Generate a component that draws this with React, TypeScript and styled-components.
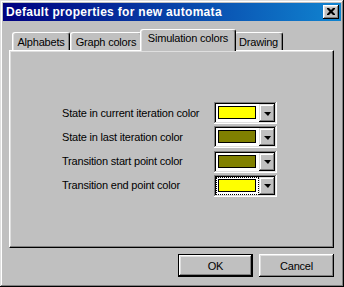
import React from "react";
import styled, { createGlobalStyle } from "styled-components";

const Global = createGlobalStyle`
  html, body { margin: 0; padding: 0; background: #c0c0c0; }
  body { font-family: "Liberation Sans", Arial, sans-serif; font-size: 11px; color: #000; }
  * { box-sizing: border-box; }
`;

const Window = styled.div`
  width: 344px;
  height: 287px;
  background: #c0c0c0;
  padding: 3px;
  display: flex;
  flex-direction: column;
  box-shadow: inset -1px -1px #000, inset 1px 1px #dfdfdf, inset -2px -2px #808080, inset 2px 2px #fff;
`;

const TitleBar = styled.div`
  height: 18px;
  flex: none;
  display: flex;
  align-items: center;
  justify-content: space-between;
  padding: 0 2px 0 3px;
  background: linear-gradient(to right, #000080, #1084d0);
`;

const Title = styled.span`
  color: #fff;
  font-weight: bold;
  font-size: 12px;
  letter-spacing: 0.3px;
  white-space: nowrap;
`;

const CloseButton = styled.div`
  width: 16px;
  height: 14px;
  background: #c0c0c0;
  display: flex;
  align-items: center;
  justify-content: center;
  box-shadow: inset -1px -1px #000, inset 1px 1px #fff, inset -2px -2px #808080, inset 2px 2px #dfdfdf;
  padding-bottom: 1px;
`;

const Body = styled.div`
  flex: 1;
  display: flex;
  flex-direction: column;
  padding: 8px 4px 4px 6px;
`;

const TabRow = styled.div`
  height: 21px;
  flex: none;
  display: flex;
  align-items: flex-end;
  padding-left: 3px;
  width: 325px;
`;

const Tab = styled.div<{ $w: number; $active?: boolean }>`
  position: relative;
  width: ${(p) => p.$w + (p.$active ? 4 : 0)}px;
  margin: 0 ${(p) => (p.$active ? -2 : 0)}px ${(p) => (p.$active ? -1 : 0)}px;
  height: ${(p) => (p.$active ? 22 : 18)}px;
  z-index: ${(p) => (p.$active ? 2 : 1)};
  background: #c0c0c0;
  border-top: 1px solid #fff;
  border-left: 1px solid #fff;
  border-right: 1px solid #000;
  border-radius: 3px 3px 0 0;
  box-shadow: inset -1px 0 #808080, inset 1px 0 #dfdfdf;
  display: flex;
  align-items: ${(p) => (p.$active ? "flex-start" : "center")};
  padding-top: ${(p) => (p.$active ? 2 : 0)}px;
  justify-content: center;
  white-space: nowrap;
  letter-spacing: -0.2px;
`;

const Panel = styled.div`
  width: 325px;
  height: 198px;
  flex: none;
  background: #c0c0c0;
  border-top: 1px solid #fff;
  border-left: 1px solid #fff;
  border-right: 1px solid #000;
  border-bottom: 1px solid #000;
  box-shadow: inset -1px -1px #808080, inset 1px 1px #dfdfdf;
  padding: 51px 0 0 52px;
`;

const Grid = styled.div`
  display: grid;
  grid-template-columns: 152px 63px;
  row-gap: 2.33px;
  align-items: center;
`;

const Label = styled.span`
  white-space: nowrap;
  letter-spacing: -0.2px;
  padding-bottom: 1px;
`;

const Combo = styled.div`
  width: 63px;
  height: 22px;
  background: #fff;
  padding: 2px;
  display: flex;
  box-shadow: inset -1px -1px #fff, inset 1px 1px #808080, inset -2px -2px #dfdfdf, inset 2px 2px #000;
`;

const ValueArea = styled.div<{ $focus?: boolean }>`
  flex: 1;
  display: flex;
  padding: 1px 2px 2px 1px;
  border: 1px dotted ${(p) => (p.$focus ? "#000" : "transparent")};
`;

const Swatch = styled.div<{ $color: string }>`
  flex: 1;
  border: 1px solid #000;
  background: ${(p) => p.$color};
`;

const DropButton = styled.div`
  width: 16px;
  height: 18px;
  background: #c0c0c0;
  display: flex;
  align-items: center;
  justify-content: center;
  box-shadow: inset -1px -1px #000, inset 1px 1px #dfdfdf, inset -2px -2px #808080, inset 2px 2px #fff;
`;

const Arrow = styled.div`
  width: 0;
  height: 0;
  border-left: 4px solid transparent;
  border-right: 3px solid transparent;
  border-top: 4px solid #000;
  margin-top: 1px;
`;

const ButtonRow = styled.div`
  display: flex;
  justify-content: flex-end;
  gap: 6px;
  margin-top: 6px;
  width: 325px;
`;

const Button = styled.div<{ $default?: boolean }>`
  width: 75px;
  height: 23px;
  background: #c0c0c0;
  display: flex;
  align-items: center;
  justify-content: center;
  letter-spacing: -0.2px;
  box-shadow: ${(p) =>
    p.$default
      ? "inset -1px -1px #000, inset 1px 1px #000, inset -2px -2px #000, inset 2px 2px #fff, inset -3px -3px #808080, inset 3px 3px #dfdfdf"
      : "inset -1px -1px #000, inset 1px 1px #fff, inset -2px -2px #808080, inset 2px 2px #dfdfdf"};
`;

const rows = [
  { label: "State in current iteration color", color: "#ffff00" },
  { label: "State in last iteration color", color: "#808000" },
  { label: "Transition start point color", color: "#808000" },
  { label: "Transition end point color", color: "#ffff00", focus: true },
];

const tabs = [
  { label: "Alphabets", w: 58 },
  { label: "Graph colors", w: 72 },
  { label: "Simulation colors", w: 92, active: true },
  { label: "Drawing", w: 49 },
];

export default function App() {
  return (
    <>
      <Global />
      <Window>
        <TitleBar>
          <Title>Default properties for new automata</Title>
          <CloseButton>
            <svg width="8" height="7" viewBox="0 0 8 7">
              <path d="M0 0h2l2 2 2-2h2v1L5.5 3.5 8 6v1H6L4 5 2 7H0V6l2.5-2.5L0 1z" fill="#000" />
            </svg>
          </CloseButton>
        </TitleBar>
        <Body>
          <TabRow>
            {tabs.map((t) => (
              <Tab key={t.label} $w={t.w} $active={t.active}>
                {t.label}
              </Tab>
            ))}
          </TabRow>
          <Panel>
            <Grid>
              {rows.map((r) => (
                <React.Fragment key={r.label}>
                  <Label>{r.label}</Label>
                  <Combo>
                    <ValueArea $focus={r.focus}>
                      <Swatch $color={r.color} />
                    </ValueArea>
                    <DropButton>
                      <Arrow />
                    </DropButton>
                  </Combo>
                </React.Fragment>
              ))}
            </Grid>
          </Panel>
          <ButtonRow>
            <Button $default>OK</Button>
            <Button>Cancel</Button>
          </ButtonRow>
        </Body>
      </Window>
    </>
  );
}
